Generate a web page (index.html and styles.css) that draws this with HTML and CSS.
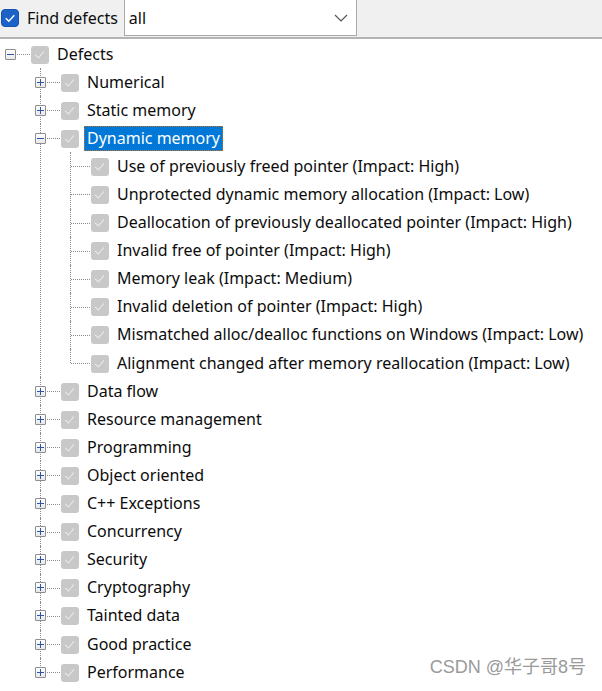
FILE: index.html
```html
<!DOCTYPE html>
<html>
<head>
<meta charset="utf-8">
<link rel="stylesheet" href="styles.css">
</head>
<body>
<div class="toolbar">
  <span class="cb"><svg width="18" height="18" viewBox="0 0 18 18"><rect x="0.5" y="0.5" width="17" height="17" rx="3.5" fill="#1c63c7" stroke="#1553b0"/><polyline points="4.8,9.2 7.8,12.2 13.3,6.2" fill="none" stroke="#fff" stroke-width="1.4"/></svg></span>
  <span class="label">Find defects</span>
  <div class="combo"><span class="combo-text">all</span><svg class="chev" width="14" height="8" viewBox="0 0 14 8"><polyline points="1,1 7,7 13,1" fill="none" stroke="#555" stroke-width="1.2"/></svg></div>
</div>
<ul class="tree">
  <li class="node">
    <div class="row"><span class="slot"><span class="exp minus"></span></span><span class="cb gray"></span><span class="txt">Defects</span></div>
    <ul class="children">
      <li class="node"><div class="row"><span class="slot"><span class="exp plus"></span></span><span class="cb gray"></span><span class="txt">Numerical</span></div></li>
      <li class="node"><div class="row"><span class="slot"><span class="exp plus"></span></span><span class="cb gray"></span><span class="txt">Static memory</span></div></li>
      <li class="node">
        <div class="row"><span class="slot"><span class="exp minus"></span></span><span class="cb gray"></span><span class="txt sel">Dynamic memory</span></div>
        <ul class="children">
          <li class="node"><div class="row"><span class="slot"></span><span class="cb gray"></span><span class="txt">Use of previously freed pointer (Impact: High)</span></div></li>
          <li class="node"><div class="row"><span class="slot"></span><span class="cb gray"></span><span class="txt">Unprotected dynamic memory allocation (Impact: Low)</span></div></li>
          <li class="node"><div class="row"><span class="slot"></span><span class="cb gray"></span><span class="txt">Deallocation of previously deallocated pointer (Impact: High)</span></div></li>
          <li class="node"><div class="row"><span class="slot"></span><span class="cb gray"></span><span class="txt">Invalid free of pointer (Impact: High)</span></div></li>
          <li class="node"><div class="row"><span class="slot"></span><span class="cb gray"></span><span class="txt">Memory leak (Impact: Medium)</span></div></li>
          <li class="node"><div class="row"><span class="slot"></span><span class="cb gray"></span><span class="txt">Invalid deletion of pointer (Impact: High)</span></div></li>
          <li class="node"><div class="row"><span class="slot"></span><span class="cb gray"></span><span class="txt">Mismatched alloc/dealloc functions on Windows (Impact: Low)</span></div></li>
          <li class="node"><div class="row"><span class="slot"></span><span class="cb gray"></span><span class="txt">Alignment changed after memory reallocation (Impact: Low)</span></div></li>
        </ul>
      </li>
      <li class="node"><div class="row"><span class="slot"><span class="exp plus"></span></span><span class="cb gray"></span><span class="txt">Data flow</span></div></li>
      <li class="node"><div class="row"><span class="slot"><span class="exp plus"></span></span><span class="cb gray"></span><span class="txt">Resource management</span></div></li>
      <li class="node"><div class="row"><span class="slot"><span class="exp plus"></span></span><span class="cb gray"></span><span class="txt">Programming</span></div></li>
      <li class="node"><div class="row"><span class="slot"><span class="exp plus"></span></span><span class="cb gray"></span><span class="txt">Object oriented</span></div></li>
      <li class="node"><div class="row"><span class="slot"><span class="exp plus"></span></span><span class="cb gray"></span><span class="txt">C++ Exceptions</span></div></li>
      <li class="node"><div class="row"><span class="slot"><span class="exp plus"></span></span><span class="cb gray"></span><span class="txt">Concurrency</span></div></li>
      <li class="node"><div class="row"><span class="slot"><span class="exp plus"></span></span><span class="cb gray"></span><span class="txt">Security</span></div></li>
      <li class="node"><div class="row"><span class="slot"><span class="exp plus"></span></span><span class="cb gray"></span><span class="txt">Cryptography</span></div></li>
      <li class="node"><div class="row"><span class="slot"><span class="exp plus"></span></span><span class="cb gray"></span><span class="txt">Tainted data</span></div></li>
      <li class="node"><div class="row"><span class="slot"><span class="exp plus"></span></span><span class="cb gray"></span><span class="txt">Good practice</span></div></li>
      <li class="node"><div class="row"><span class="slot"><span class="exp plus"></span></span><span class="cb gray"></span><span class="txt">Performance</span></div></li>
    </ul>
  </li>
</ul>
<div class="watermark">CSDN @华子哥8号</div>
</body>
</html>
```
FILE: styles.css
```css
html, body {
  margin: 0;
  padding: 0;
  background: #fff;
}
body {
  font-family: "Noto Sans", "Open Sans", "Noto Sans CJK SC", sans-serif;
  font-size: 16px;
  color: #0c0c0c;
  position: relative;
  width: 602px;
  height: 691px;
  overflow: hidden;
}
.toolbar {
  display: flex;
  align-items: center;
  background: #f0f0f0;
  border-bottom: 2px solid #b4b4b4;
  box-sizing: border-box;
  height: 39px;
  padding-left: 1px;
  padding-bottom: 2px;
}
.toolbar .cb {
  width: 18px;
  height: 18px;
  display: block;
}
.toolbar .cb svg { display: block; }
.label {
  margin-left: 8px;
}
.combo {
  margin-left: 6px;
  align-self: flex-start;
  width: 233px;
  height: 36px;
  box-sizing: border-box;
  background: #fff;
  border: 1px solid #a9a9a9;
  border-top: none;
  display: flex;
  align-items: center;
  padding-left: 4px;
  padding-right: 8px;
}
.combo-text {
  flex: 1;
}
.chev { display: block; }

.tree, .children {
  list-style: none;
  margin: 0;
  padding: 0;
}
.tree { padding-top: 1px; }
.children { padding-left: 30px; }
.node { position: relative; }
.children > .node::before {
  content: "";
  position: absolute;
  left: 10px;
  top: 0;
  bottom: 0;
  border-left: 1px dotted #8a8a8a;
}
.children > .node:last-child::before {
  bottom: auto;
  height: 14px;
}
.row {
  position: relative;
  display: flex;
  align-items: center;
  height: 28.1px;
}
.row::after {
  content: "";
  position: absolute;
  left: 11px;
  width: 19px;
  top: 14px;
  border-top: 1px dotted #8a8a8a;
}
.slot {
  position: relative;
  z-index: 1;
  width: 22px;
  flex: none;
  display: flex;
  padding-left: 5px;
  box-sizing: border-box;
}
.exp {
  position: relative;
  width: 11px;
  height: 11px;
  box-sizing: border-box;
  border: 1px solid #8e8e8e;
  border-radius: 1px;
  background: linear-gradient(#ffffff, #e8e8e8);
}
.exp::before {
  content: "";
  position: absolute;
  left: 1px;
  top: 4px;
  width: 7px;
  height: 1px;
  background: #2f55a6;
}
.exp.plus::after {
  content: "";
  position: absolute;
  left: 4px;
  top: 1px;
  width: 1px;
  height: 7px;
  background: #2f55a6;
}
.cb.gray {
  position: relative;
  z-index: 1;
  flex: none;
  margin-left: 9px;
  width: 18px;
  height: 18px;
  border-radius: 3px;
  background: #c8c8c8;
  margin-top: 1px;
}
.cb.gray::after {
  content: "";
  position: absolute;
  left: 6px;
  top: 3px;
  width: 4px;
  height: 8px;
  border-right: 1.6px solid #ebebeb;
  border-bottom: 1.6px solid #ebebeb;
  transform: rotate(40deg);
}
.txt {
  margin-left: 5px;
  padding: 2px 2px 2px;
  border: 1px solid transparent;
  white-space: nowrap;
  line-height: 19px;
}
.txt.sel {
  background: #0078d7;
  color: #fff;
  border: 1px dotted #c9731d;
}
.watermark {
  position: absolute;
  right: 16px;
  bottom: 13px;
  color: #9a9a9a;
  font-family: "Liberation Sans", "Noto Sans CJK SC", sans-serif;
  font-size: 18px;
}
```
